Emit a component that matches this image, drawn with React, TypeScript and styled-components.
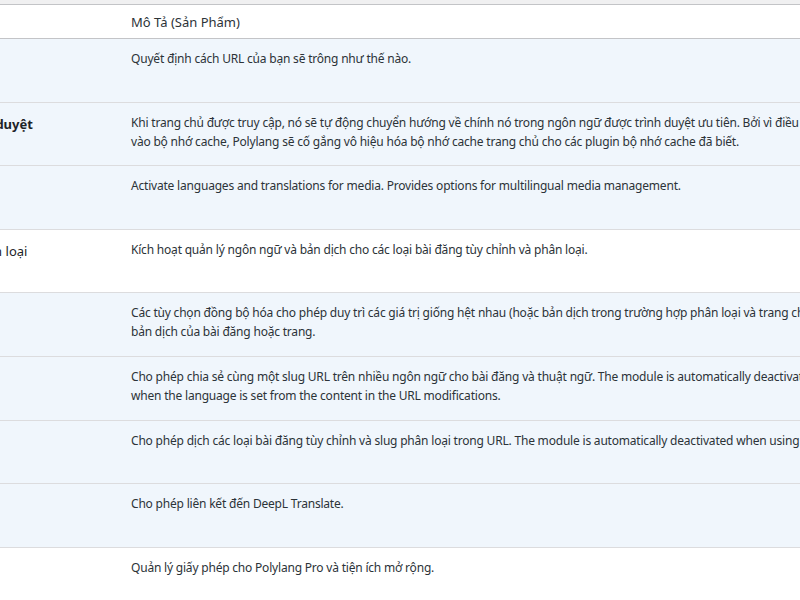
import styled, { createGlobalStyle } from "styled-components";

type Module = {
  name: string;
  lines: string[];
  active: boolean;
};

const modules: Module[] = [
  {
    name: "Sửa đổi URL",
    lines: ["Quyết định cách URL của bạn sẽ trông như thế nào."],
    active: true,
  },
  {
    name: "Phát hiện ngôn ngữ trình duyệt",
    lines: [
      "Khi trang chủ được truy cập, nó sẽ tự động chuyển hướng về chính nó trong ngôn ngữ được trình duyệt ưu tiên. Bởi vì điều này, trang chủ không được đưa",
      "vào bộ nhớ cache, Polylang sẽ cố gắng vô hiệu hóa bộ nhớ cache trang chủ cho các plugin bộ nhớ cache đã biết.",
    ],
    active: true,
  },
  {
    name: "Phương tiện",
    lines: [
      "Activate languages and translations for media. Provides options for multilingual media management.",
    ],
    active: true,
  },
  {
    name: "Loại bài đăng tự tạo và phân loại",
    lines: [
      "Kích hoạt quản lý ngôn ngữ và bản dịch cho các loại bài đăng tùy chỉnh và phân loại.",
    ],
    active: false,
  },
  {
    name: "Đồng bộ hóa",
    lines: [
      "Các tùy chọn đồng bộ hóa cho phép duy trì các giá trị giống hệt nhau (hoặc bản dịch trong trường hợp phân loại và trang cha) của các trường meta",
      "bản dịch của bài đăng hoặc trang.",
    ],
    active: true,
  },
  {
    name: "Chia sẻ slug",
    lines: [
      "Cho phép chia sẻ cùng một slug URL trên nhiều ngôn ngữ cho bài đăng và thuật ngữ. The module is automatically deactivated when using plain permalinks or",
      "when the language is set from the content in the URL modifications.",
    ],
    active: true,
  },
  {
    name: "Dịch slug",
    lines: [
      "Cho phép dịch các loại bài đăng tùy chỉnh và slug phân loại trong URL. The module is automatically deactivated when using plain permalinks.",
    ],
    active: true,
  },
  {
    name: "DeepL",
    lines: ["Cho phép liên kết đến DeepL Translate."],
    active: true,
  },
  {
    name: "Khóa giấy phép",
    lines: ["Quản lý giấy phép cho Polylang Pro và tiện ích mở rộng."],
    active: false,
  },
];

export default function App() {
  return (
    <>
      <GlobalStyle />
      <Viewport>
        <Table>
          <thead>
            <tr>
              <HeadCell />
              <HeadCell>Mô Tả (Sản Phẩm)</HeadCell>
            </tr>
          </thead>
          <tbody>
            {modules.map(m => (
              <Row key={m.name} $active={m.active}>
                <NameCell>
                  <Name $active={m.active}>{m.name}</Name>
                </NameCell>
                <DescCell>
                  {m.lines.map(line => (
                    <Line key={line}>{line}</Line>
                  ))}
                </DescCell>
              </Row>
            ))}
          </tbody>
        </Table>
      </Viewport>
    </>
  );
}

const GlobalStyle = createGlobalStyle`
  html, body {
    margin: 0;
    padding: 0;
    background: #f0f0f1;
    overflow: hidden;
  }

  body {
    font-family: "Noto Sans", "Open Sans", sans-serif;
    color: #2c3338;
  }
`;

const Viewport = styled.div`
  width: 800px;
  height: 600px;
  overflow: hidden;
  padding-top: 4px;
  box-sizing: border-box;
`;

const Table = styled.table`
  margin-left: -182px;
  width: 1400px;
  border-collapse: collapse;
  border-spacing: 0;
  background: #fff;
  border-top: 1px solid #c3c4c7;
  table-layout: fixed;

  th:first-child {
    width: 313px;
  }
`;

const HeadCell = styled.th`
  height: 34px;
  padding: 0;
  text-align: left;
  font-weight: 400;
  font-size: 13px;
  color: #2c3338;
  border-bottom: 1px solid #c3c4c7;
  vertical-align: middle;
  box-sizing: border-box;
`;

const Row = styled.tr<{ $active: boolean }>`
  height: 63.6px;
  background: ${p => (p.$active ? "#f0f6fc" : "#fff")};

  td {
    border-bottom: 1px solid #dcdcde;
  }
`;

const NameCell = styled.td`
  padding: 9px 10px 0 10px;
  vertical-align: top;
  white-space: nowrap;
  box-sizing: border-box;
`;

const Name = styled.span<{ $active: boolean }>`
  font-size: 13px;
  line-height: 19px;
  font-weight: ${p => (p.$active ? 700 : 400)};
  color: #1d2327;
`;

const DescCell = styled.td`
  padding: 10px 0 0 0;
  vertical-align: top;
  font-size: 12px;
  letter-spacing: -0.2px;
  line-height: 19px;
  color: #2c3338;
`;

const Line = styled.span`
  display: block;
  white-space: nowrap;
`;
